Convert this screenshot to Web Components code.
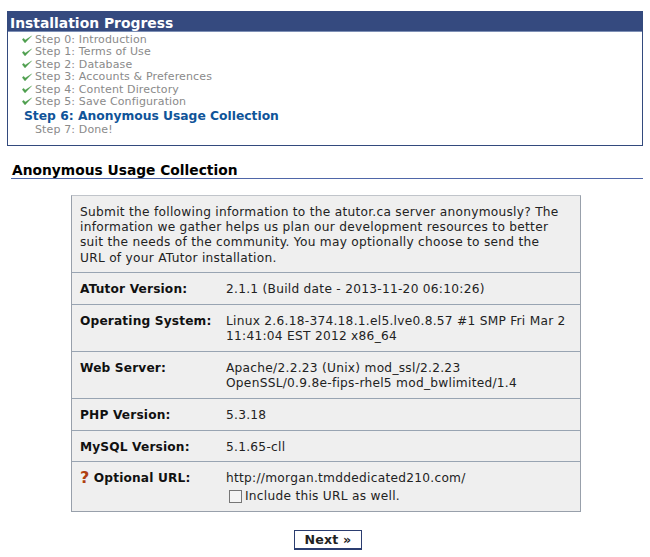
<!DOCTYPE html>
<html>
<head>
<meta charset="utf-8">
<title>Installation Progress</title>
<style>
  html, body { margin: 0; padding: 0; background: #fff; }
  body { font-family: "DejaVu Sans", Verdana, sans-serif; color: #000; }
</style>
</head>
<body>
<install-page>
  <install-progress slot="progress" heading="Installation Progress">
    <install-step state="done">Step 0: Introduction</install-step>
    <install-step state="done">Step 1: Terms of Use</install-step>
    <install-step state="done">Step 2: Database</install-step>
    <install-step state="done">Step 3: Accounts &amp; Preferences</install-step>
    <install-step state="done">Step 4: Content Directory</install-step>
    <install-step state="done">Step 5: Save Configuration</install-step>
    <install-step state="current">Step 6: Anonymous Usage Collection</install-step>
    <install-step>Step 7: Done!</install-step>
  </install-progress>
  <section-title slot="title">Anonymous Usage Collection</section-title>
  <info-box slot="box">
    <info-row intro>Submit the following information to the atutor.ca server anonymously? The information we gather helps us plan our development resources to better suit the needs of the community. You may optionally choose to send the URL of your ATutor installation.</info-row>
    <info-row label="ATutor Version:">2.1.1 (Build date - 2013-11-20 06:10:26)</info-row>
    <info-row label="Operating System:">Linux 2.6.18-374.18.1.el5.lve0.8.57 #1 SMP Fri Mar 2 11:41:04 EST 2012 x86_64</info-row>
    <info-row label="Web Server:">Apache/2.2.23 (Unix) mod_ssl/2.2.23<br>OpenSSL/0.9.8e-fips-rhel5 mod_bwlimited/1.4</info-row>
    <info-row label="PHP Version:">5.3.18</info-row>
    <info-row label="MySQL Version:" style="padding-bottom:6px">5.1.65-cll</info-row>
    <info-row label="Optional URL:" help>http://morgan.tmddedicated210.com/<url-check>Include this URL as well.</url-check></info-row>
  </info-box>
  <next-button slot="action">Next »</next-button>
</install-page>

<script>
// Page frame: just stacks the four areas with the right gaps
class InstallPage extends HTMLElement {
  constructor() {
    super();
    this.attachShadow({ mode: 'open' });
    this.shadowRoot.innerHTML = `
      <style>
        :host { display: flex; flex-direction: column; padding: 11px 7px 0 7px; }
        .title { margin: 16px 0 16px 4px; }
        .box { margin-left: 64px; width: 510px; }
        .action { margin: 17px 0 0 287px; }
      </style>
      <slot name="progress"></slot>
      <div class="title"><slot name="title"></slot></div>
      <div class="box"><slot name="box"></slot></div>
      <div class="action"><slot name="action"></slot></div>
    `;
  }
}

class InstallProgress extends HTMLElement {
  constructor() {
    super();
    this.attachShadow({ mode: 'open' });
    this.shadowRoot.innerHTML = `
      <style>
        :host { display: block; height: 135px; box-sizing: border-box; border: 1px solid #334a7d; border-top: 0; }
        h3 {
          margin: 0; height: 21px; line-height: 24px; padding-left: 2px;
          background: #354a7f; border-bottom: 1px solid #7d8fb5; box-sizing: border-box;
          color: #fff; font-size: 13.9px; font-weight: bold;
        }
        .steps { display: flex; flex-direction: column; padding: 1.3px 0 0 14px; }
      </style>
      <h3></h3>
      <div class="steps"><slot></slot></div>
    `;
    this.shadowRoot.querySelector('h3').textContent = this.getAttribute('heading');
  }
}

class InstallStep extends HTMLElement {
  constructor() {
    super();
    this.attachShadow({ mode: 'open' });
    this.shadowRoot.innerHTML = `
      <style>
        :host { display: flex; align-items: center; height: 12.4px; font-size: 11px; letter-spacing: .13px; color: #8a8a8a; }
        .tick { width: 13px; height: 12px; flex: none; }
        .tick svg { display: block; }
        :host([state="current"]) {
          height: 15px; margin: .5px 0 .5px 2px;
          font-size: 12.3px; letter-spacing: 0; font-weight: bold; color: #0f5499;
        }
        :host([state="current"]) .tick { display: none; }
      </style>
      <span class="tick"></span><slot></slot>
    `;
    if (this.getAttribute('state') === 'done') {
      this.shadowRoot.querySelector('.tick').innerHTML =
        '<svg width="12" height="12" viewBox="0 0 12 12"><path d="M.2 6.5 L3 10 L9.8 2.8 L3.3 7 L1.6 5.2 Z" fill="#4f9f4f" stroke="#4f9f4f" stroke-width=".3" stroke-linejoin="round"/></svg>';
    }
  }
}

class SectionTitle extends HTMLElement {
  constructor() {
    super();
    this.attachShadow({ mode: 'open' });
    this.shadowRoot.innerHTML = `
      <style>
        :host {
          display: block; height: 17px; line-height: 16px; box-sizing: border-box;
          padding-left: 1px; border-bottom: 1px solid #4f66a8;
          font-size: 13.8px; font-weight: bold; color: #000;
        }
      </style>
      <slot></slot>
    `;
  }
}

class InfoBox extends HTMLElement {
  constructor() {
    super();
    this.attachShadow({ mode: 'open' });
    this.shadowRoot.innerHTML = `
      <style>
        :host { display: block; background: #efefef; border: 1px solid #98a0ab; border-top-color: #c0c4ca; box-sizing: border-box; }
      </style>
      <slot></slot>
    `;
  }
}

class InfoRow extends HTMLElement {
  constructor() {
    super();
    this.attachShadow({ mode: 'open' });
    this.shadowRoot.innerHTML = `
      <style>
        :host {
          display: grid; grid-template-columns: 146px 1fr;
          padding: 9px 8px 7px 8px; border-top: 1px solid #98a4b2;
          font-size: 12.2px; letter-spacing: .27px; line-height: 15px; color: #222;
        }
        :host(:first-child) { border-top: 0; }
        :host([intro]) { display: block; padding: 9px 18px 6.2px 8px; line-height: 15.2px; }
        .label { font-weight: bold; letter-spacing: .15px; color: #111; white-space: nowrap; }
        .help { color: #b0400f; font-size: 16px; line-height: 14px; margin-right: 4.5px; vertical-align: -1px; letter-spacing: 0; }
      </style>
      <span class="label"></span><span class="value"><slot></slot></span>
    `;
    const label = this.shadowRoot.querySelector('.label');
    if (this.hasAttribute('intro')) {
      label.remove();
    } else {
      label.textContent = this.getAttribute('label');
      if (this.hasAttribute('help')) {
        const mark = document.createElement('span');
        mark.className = 'help';
        mark.textContent = '?';
        label.prepend(mark);
      }
    }
  }
}

class UrlCheck extends HTMLElement {
  constructor() {
    super();
    this.attachShadow({ mode: 'open' });
    this.shadowRoot.innerHTML = `
      <style>
        :host { display: flex; align-items: center; gap: 3px; height: 18px; padding: 3px 0 0 3px; box-sizing: border-box; }
        i { width: 11px; height: 11px; border: 1px solid #767676; background: #f4f4f4; flex: none; }
      </style>
      <i></i><slot></slot>
    `;
  }
}

class NextButton extends HTMLElement {
  constructor() {
    super();
    this.attachShadow({ mode: 'open' });
    this.shadowRoot.innerHTML = `
      <style>
        :host {
          display: inline-block; width: 68px; height: 20px; box-sizing: border-box;
          border: 1px solid #2b3d70; border-bottom-width: 2px; background: #fff;
          text-align: center; line-height: 18px;
          font-size: 12.6px; letter-spacing: .2px; font-weight: bold; color: #222;
        }
      </style>
      <slot></slot>
    `;
  }
}

customElements.define('install-page', InstallPage);
customElements.define('install-progress', InstallProgress);
customElements.define('install-step', InstallStep);
customElements.define('section-title', SectionTitle);
customElements.define('info-box', InfoBox);
customElements.define('info-row', InfoRow);
customElements.define('url-check', UrlCheck);
customElements.define('next-button', NextButton);
</script>
</body>
</html>
